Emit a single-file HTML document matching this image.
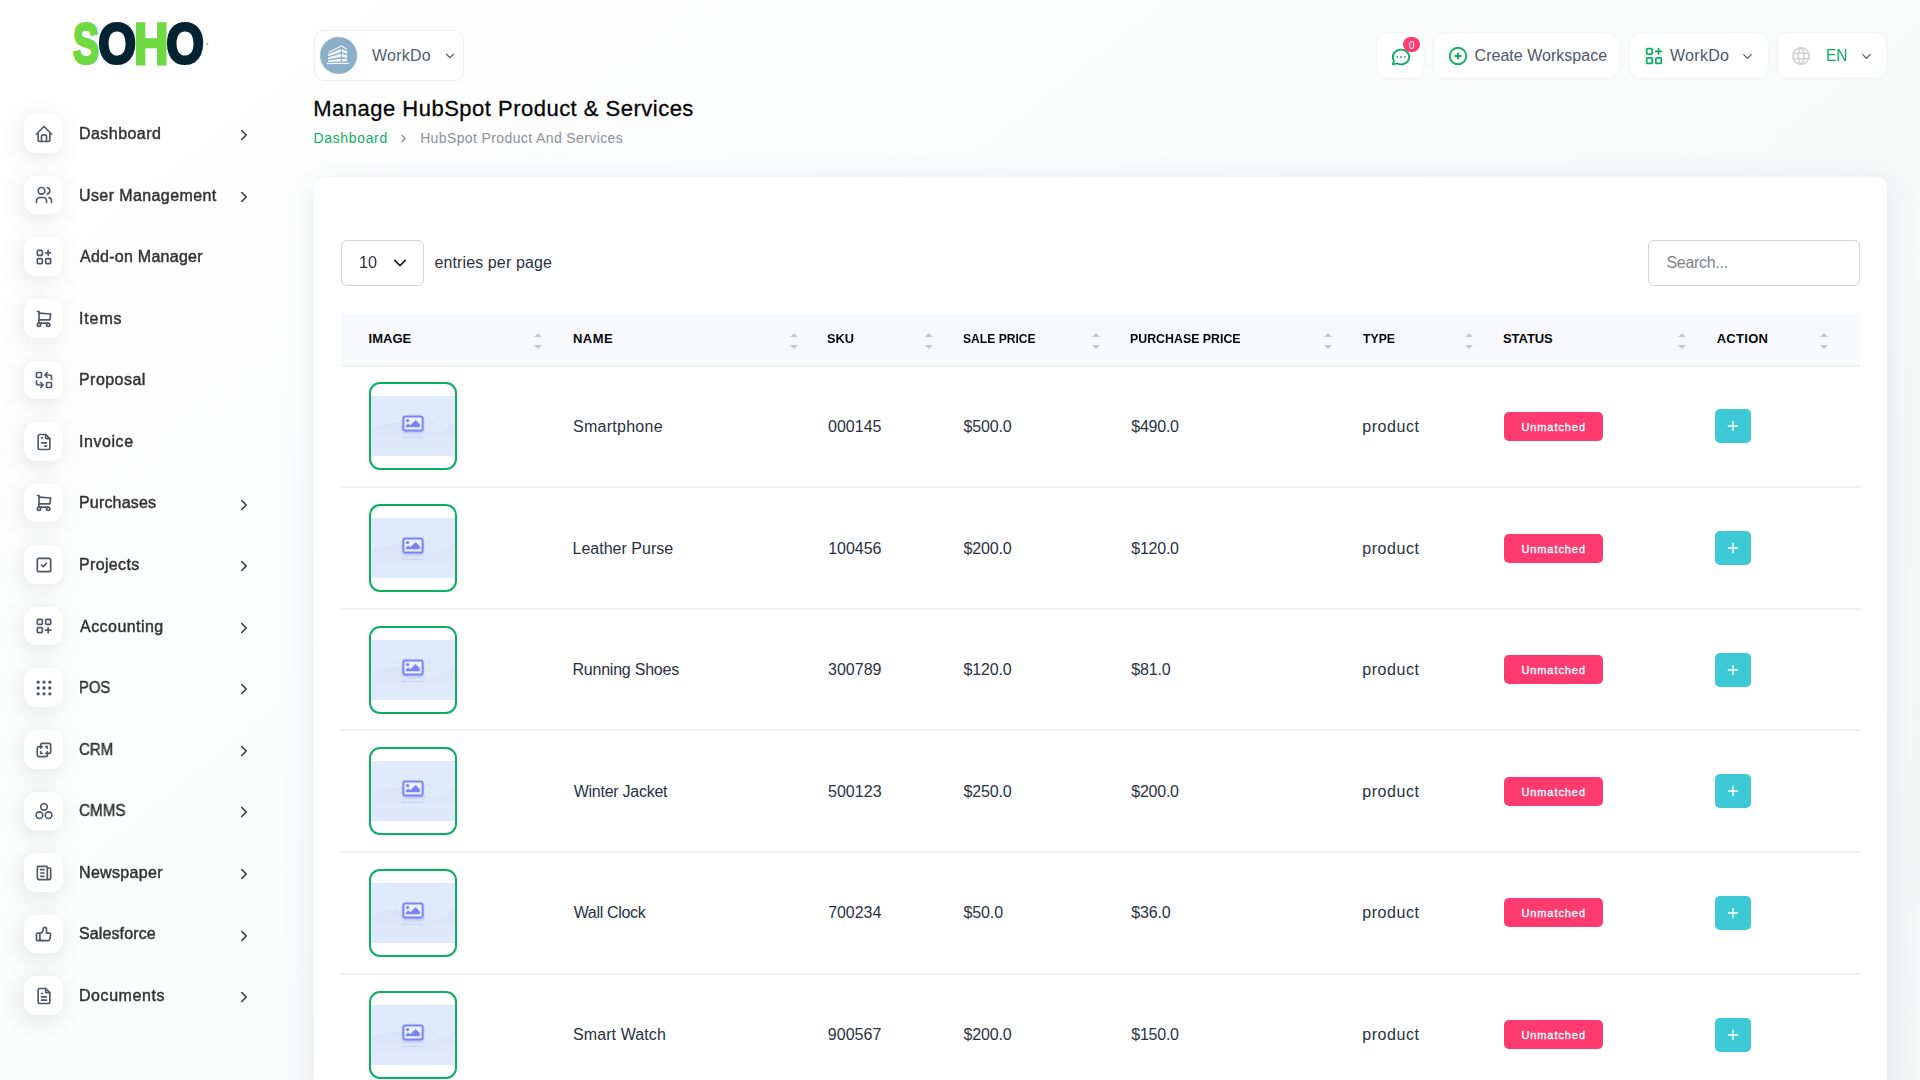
<!DOCTYPE html>
<html lang="en">
<head>
<meta charset="utf-8">
<title>Manage HubSpot Product &amp; Services</title>
<style>
*{box-sizing:border-box;margin:0;padding:0}
html,body{width:1920px;height:1080px;overflow:hidden}
body{font-family:"Liberation Sans",sans-serif;background:linear-gradient(141.55deg,rgba(240,244,243,0) 3.46%,#f0f4f3 99.86%) 0 0/1920px 1700px no-repeat,#fff;color:#293240;position:relative}
.abs{position:absolute}
.t{position:absolute;white-space:nowrap;line-height:20px;margin-top:-10px;transform-origin:0 50%}
.g{will-change:transform}
.tc{transform:translateX(-50%);transform-origin:50% 50%}
.ic{position:absolute;fill:none;stroke-linecap:round;stroke-linejoin:round}
.mi{position:absolute;left:24px;width:38.6px;height:38.6px;border-radius:12px;background:#fff;box-shadow:-3px 4px 23px rgba(0,0,0,.1)}
.pill{position:absolute;background:#fff;border-radius:12px;box-shadow:0 0 2px rgba(0,0,0,.08)}
#card{position:absolute;left:314px;top:177px;width:1573px;height:920px;background:#fff;border-radius:10px;box-shadow:0 6px 30px rgba(182,186,203,.3)}
.inp{position:absolute;border:1px solid #ced4da;border-radius:6px;background:#fff}
#thead{position:absolute;left:341px;top:313px;width:1519px;height:54px;background:#f8f9fd;border-bottom:2px solid #f1f1f1}
.rowline{position:absolute;left:341px;width:1519px;height:2px;background:#f1f1f1}
.thumb{position:absolute;left:369px;width:88px;height:88px;border:2px solid #0caf60;border-radius:11px;background:#fff;overflow:hidden}
.thumb i{position:absolute;left:0;top:11.9px;width:84px;height:59.8px;background:#e0eafd}
.thumb svg{position:absolute;left:0;top:11.9px;width:84px;height:60px}
.badge{position:absolute;left:1503.8px;width:99.2px;height:29px;border-radius:5px;background:#ff3a6e}
.act{position:absolute;left:1715px;width:36px;height:33.8px;border-radius:5px;background:#3ec9d6}
.sort{position:absolute;top:333.2px;width:8px;height:16px}
.sort:before{content:"";position:absolute;left:0;top:0;border:4px solid transparent;border-top:0;border-bottom:4px solid #c8c8c8}
.sort:after{content:"";position:absolute;left:0;top:11.8px;border:4px solid transparent;border-bottom:0;border-top:4px solid #c8c8c8}

</style>
</head>
<body>
<svg class="abs" style="left:0;top:0" width="300" height="100" role="img" aria-label="SOHO"><title>SOHO</title><g font-family="Liberation Sans, sans-serif" font-weight="700" font-size="56" stroke-width="3.0" stroke-linejoin="miter" text-rendering="geometricPrecision"><text transform="translate(73.11 63.30) scale(0.6978 1.0104)" fill="#6fd943" stroke="#6fd943">S</text><text transform="translate(98.34 63.30) scale(0.8677 1.0108)" fill="#022332" stroke="#022332">O</text><text transform="translate(134.07 63.73) scale(0.8505 1.0418)" fill="#6fd943" stroke="#6fd943">H</text><text transform="translate(166.30 63.30) scale(0.8654 1.0108)" fill="#022332" stroke="#022332">O</text></g><circle cx="207.4" cy="44" r="0.9" fill="#0caf60" opacity=".7"/></svg>
<div class="abs" style="left:0;top:0;width:290px;height:1035px;overflow:hidden"><div class="mi" style="top:114.30px"></div><div class="mi" style="top:175.87px"></div><div class="mi" style="top:237.44px"></div><div class="mi" style="top:299.01px"></div><div class="mi" style="top:360.58px"></div><div class="mi" style="top:422.15px"></div><div class="mi" style="top:483.72px"></div><div class="mi" style="top:545.29px"></div><div class="mi" style="top:606.86px"></div><div class="mi" style="top:668.43px"></div><div class="mi" style="top:730.00px"></div><div class="mi" style="top:791.57px"></div><div class="mi" style="top:853.14px"></div><div class="mi" style="top:914.71px"></div><div class="mi" style="top:976.28px"></div></div>
<svg class="ic" style="left:33.50px;top:123.80px;width:20.00px;height:20.00px;stroke:#4f5968;stroke-width:2" viewBox="0 0 24 24"><polyline points="5 12 3 12 12 3 21 12 19 12"/><path d="M5 12v7a2 2 0 0 0 2 2h10a2 2 0 0 0 2 -2v-7"/><path d="M9 21v-6a2 2 0 0 1 2 -2h2a2 2 0 0 1 2 2v6"/></svg>
<span id="t0" class="t g" style="left:78.82px;top:134.00px;font-size:16px;color:#333;letter-spacing:0.446px;-webkit-text-stroke:.45px #333;">Dashboard</span>
<svg class="ic" style="left:234.60px;top:126.20px;width:18.00px;height:18.00px;stroke:#333;stroke-width:2" viewBox="0 0 24 24"><polyline points="9 6 15 12 9 18"/></svg>
<svg class="ic" style="left:33.50px;top:185.37px;width:20.00px;height:20.00px;stroke:#4f5968;stroke-width:2" viewBox="0 0 24 24"><circle cx="9" cy="7" r="4"/><path d="M3 21v-2a4 4 0 0 1 4 -4h4a4 4 0 0 1 4 4v2"/><path d="M16 3.13a4 4 0 0 1 0 7.75"/><path d="M21 21v-2a4 4 0 0 0 -3 -3.85"/></svg>
<span id="t1" class="t g" style="left:78.83px;top:196.00px;font-size:16px;color:#333;letter-spacing:0.402px;-webkit-text-stroke:.45px #333;">User Management</span>
<svg class="ic" style="left:234.60px;top:187.77px;width:18.00px;height:18.00px;stroke:#333;stroke-width:2" viewBox="0 0 24 24"><polyline points="9 6 15 12 9 18"/></svg>
<svg class="ic" style="left:33.50px;top:246.94px;width:20.00px;height:20.00px;stroke:#4f5968;stroke-width:2" viewBox="0 0 24 24"><rect x="4" y="4" width="6" height="6" rx="1"/><rect x="4" y="14" width="6" height="6" rx="1"/><rect x="14" y="14" width="6" height="6" rx="1"/><line x1="14" y1="7" x2="20" y2="7"/><line x1="17" y1="4" x2="17" y2="10"/></svg>
<span id="t2" class="t g" style="left:79.86px;top:257.00px;font-size:16px;color:#333;letter-spacing:0.259px;-webkit-text-stroke:.45px #333;">Add-on Manager</span>
<svg class="ic" style="left:33.50px;top:308.51px;width:20.00px;height:20.00px;stroke:#4f5968;stroke-width:2" viewBox="0 0 24 24"><circle cx="6" cy="19" r="2"/><circle cx="17" cy="19" r="2"/><path d="M17 17h-11v-14h-2"/><path d="M6 5l14 1l-1 7h-13"/></svg>
<span id="t3" class="t g" style="left:79.16px;top:319.00px;font-size:16px;color:#333;letter-spacing:0.867px;-webkit-text-stroke:.45px #333;">Items</span>
<svg class="ic" style="left:33.50px;top:370.08px;width:20.00px;height:20.00px;stroke:#4f5968;stroke-width:2" viewBox="0 0 24 24"><rect x="3" y="3" width="6" height="6" rx="1"/><rect x="15" y="15" width="6" height="6" rx="1"/><path d="M21 11v-3a2 2 0 0 0 -2 -2h-6l3 3m0 -6l-3 3"/><path d="M3 13v3a2 2 0 0 0 2 2h6l-3 -3m0 6l3 -3"/></svg>
<span id="t4" class="t g" style="left:78.70px;top:380.00px;font-size:16px;color:#333;letter-spacing:0.448px;-webkit-text-stroke:.45px #333;">Proposal</span>
<svg class="ic" style="left:33.50px;top:431.65px;width:20.00px;height:20.00px;stroke:#4f5968;stroke-width:2" viewBox="0 0 24 24"><path d="M14 3v4a1 1 0 0 0 1 1h4"/><path d="M17 21h-10a2 2 0 0 1 -2 -2v-14a2 2 0 0 1 2 -2h7l5 5v11a2 2 0 0 1 -2 2z"/><line x1="9" y1="7" x2="10" y2="7"/><line x1="9" y1="13" x2="15" y2="13"/><line x1="13" y1="17" x2="15" y2="17"/></svg>
<span id="t5" class="t g" style="left:79.16px;top:442.00px;font-size:16px;color:#333;letter-spacing:0.563px;-webkit-text-stroke:.45px #333;">Invoice</span>
<svg class="ic" style="left:33.50px;top:493.22px;width:20.00px;height:20.00px;stroke:#4f5968;stroke-width:2" viewBox="0 0 24 24"><circle cx="6" cy="19" r="2"/><circle cx="17" cy="19" r="2"/><path d="M17 17h-11v-14h-2"/><path d="M6 5l14 1l-1 7h-13"/></svg>
<span id="t6" class="t g" style="left:78.70px;top:503.00px;font-size:16px;color:#333;letter-spacing:0.179px;-webkit-text-stroke:.45px #333;">Purchases</span>
<svg class="ic" style="left:234.60px;top:495.62px;width:18.00px;height:18.00px;stroke:#333;stroke-width:2" viewBox="0 0 24 24"><polyline points="9 6 15 12 9 18"/></svg>
<svg class="ic" style="left:33.50px;top:554.79px;width:20.00px;height:20.00px;stroke:#4f5968;stroke-width:2" viewBox="0 0 24 24"><rect x="4" y="4" width="16" height="16" rx="2"/><path d="M9 12l2 2l4 -4"/></svg>
<span id="t7" class="t g" style="left:78.82px;top:565.00px;font-size:16px;color:#333;letter-spacing:0.354px;-webkit-text-stroke:.45px #333;">Projects</span>
<svg class="ic" style="left:234.60px;top:557.19px;width:18.00px;height:18.00px;stroke:#333;stroke-width:2" viewBox="0 0 24 24"><polyline points="9 6 15 12 9 18"/></svg>
<svg class="ic" style="left:33.50px;top:616.36px;width:20.00px;height:20.00px;stroke:#4f5968;stroke-width:2" viewBox="0 0 24 24"><rect x="4" y="4" width="6" height="6" rx="1"/><rect x="14" y="4" width="6" height="6" rx="1"/><rect x="4" y="14" width="6" height="6" rx="1"/><path d="M14 17h6m-3 -3v6"/></svg>
<span id="t8" class="t g" style="left:79.51px;top:627.00px;font-size:16px;color:#333;letter-spacing:0.455px;-webkit-text-stroke:.45px #333;">Accounting</span>
<svg class="ic" style="left:234.60px;top:618.76px;width:18.00px;height:18.00px;stroke:#333;stroke-width:2" viewBox="0 0 24 24"><polyline points="9 6 15 12 9 18"/></svg>
<svg class="ic" style="left:33.50px;top:677.93px;width:20.00px;height:20.00px;stroke:#4f5968;stroke-width:2" viewBox="0 0 24 24"><circle cx="5" cy="5" r="1"/><circle cx="12" cy="5" r="1"/><circle cx="19" cy="5" r="1"/><circle cx="5" cy="12" r="1"/><circle cx="12" cy="12" r="1"/><circle cx="19" cy="12" r="1"/><circle cx="5" cy="19" r="1"/><circle cx="12" cy="19" r="1"/><circle cx="19" cy="19" r="1"/></svg>
<span id="t9" class="t g" style="left:79.24px;top:688.00px;font-size:16px;color:#333;transform:scaleX(0.9272);-webkit-text-stroke:.45px #333;">POS</span>
<svg class="ic" style="left:234.60px;top:680.33px;width:18.00px;height:18.00px;stroke:#333;stroke-width:2" viewBox="0 0 24 24"><polyline points="9 6 15 12 9 18"/></svg>
<svg class="ic" style="left:33.50px;top:739.50px;width:20.00px;height:20.00px;stroke:#4f5968;stroke-width:2" viewBox="0 0 24 24"><path d="M16 16v2a2 2 0 0 1 -2 2h-8a2 2 0 0 1 -2 -2v-8a2 2 0 0 1 2 -2h2v-2a2 2 0 0 1 2 -2h8a2 2 0 0 1 2 2v8a2 2 0 0 1 -2 2h-2"/><polyline points="10 8 8 8 8 10"/><polyline points="8 14 8 16 10 16"/><polyline points="14 8 16 8 16 10"/><polyline points="16 14 16 16 14 16"/></svg>
<span id="t10" class="t g" style="left:79.26px;top:750.00px;font-size:16px;color:#333;transform:scaleX(0.9393);-webkit-text-stroke:.45px #333;">CRM</span>
<svg class="ic" style="left:234.60px;top:741.90px;width:18.00px;height:18.00px;stroke:#333;stroke-width:2" viewBox="0 0 24 24"><polyline points="9 6 15 12 9 18"/></svg>
<svg class="ic" style="left:33.50px;top:801.07px;width:20.00px;height:20.00px;stroke:#4f5968;stroke-width:2" viewBox="0 0 24 24"><circle cx="12" cy="7" r="4"/><circle cx="6.5" cy="17" r="4"/><circle cx="17.5" cy="17" r="4"/></svg>
<span id="t11" class="t g" style="left:79.17px;top:811.00px;font-size:16px;color:#333;transform:scaleX(0.9504);-webkit-text-stroke:.45px #333;">CMMS</span>
<svg class="ic" style="left:234.60px;top:803.47px;width:18.00px;height:18.00px;stroke:#333;stroke-width:2" viewBox="0 0 24 24"><polyline points="9 6 15 12 9 18"/></svg>
<svg class="ic" style="left:33.50px;top:862.64px;width:20.00px;height:20.00px;stroke:#4f5968;stroke-width:2" viewBox="0 0 24 24"><path d="M16 6h3a1 1 0 0 1 1 1v11a2 2 0 0 1 -4 0v-13a1 1 0 0 0 -1 -1h-10a1 1 0 0 0 -1 1v12a3 3 0 0 0 3 3h11"/><line x1="8" y1="8" x2="12" y2="8"/><line x1="8" y1="12" x2="12" y2="12"/><line x1="8" y1="16" x2="12" y2="16"/></svg>
<span id="t12" class="t g" style="left:78.84px;top:873.00px;font-size:16px;color:#333;letter-spacing:0.322px;-webkit-text-stroke:.45px #333;">Newspaper</span>
<svg class="ic" style="left:234.60px;top:865.04px;width:18.00px;height:18.00px;stroke:#333;stroke-width:2" viewBox="0 0 24 24"><polyline points="9 6 15 12 9 18"/></svg>
<svg class="ic" style="left:33.50px;top:924.21px;width:20.00px;height:20.00px;stroke:#4f5968;stroke-width:2" viewBox="0 0 24 24"><path d="M7 11v8a1 1 0 0 1 -1 1h-2a1 1 0 0 1 -1 -1v-7a1 1 0 0 1 1 -1h3a4 4 0 0 0 4 -4v-1a2 2 0 0 1 4 0v5h3a2 2 0 0 1 2 2l-1 5a2 3 0 0 1 -2 2h-7a3 3 0 0 1 -3 -3"/></svg>
<span id="t13" class="t g" style="left:79.03px;top:934.00px;font-size:16px;color:#333;letter-spacing:0.119px;-webkit-text-stroke:.45px #333;">Salesforce</span>
<svg class="ic" style="left:234.60px;top:926.61px;width:18.00px;height:18.00px;stroke:#333;stroke-width:2" viewBox="0 0 24 24"><polyline points="9 6 15 12 9 18"/></svg>
<svg class="ic" style="left:33.50px;top:985.78px;width:20.00px;height:20.00px;stroke:#4f5968;stroke-width:2" viewBox="0 0 24 24"><path d="M14 3v4a1 1 0 0 0 1 1h4"/><path d="M17 21h-10a2 2 0 0 1 -2 -2v-14a2 2 0 0 1 2 -2h7l5 5v11a2 2 0 0 1 -2 2z"/><line x1="9" y1="9" x2="10" y2="9"/><line x1="9" y1="13" x2="15" y2="13"/><line x1="9" y1="17" x2="15" y2="17"/></svg>
<span id="t14" class="t g" style="left:78.82px;top:996.00px;font-size:16px;color:#333;letter-spacing:0.563px;-webkit-text-stroke:.45px #333;">Documents</span>
<svg class="ic" style="left:234.60px;top:988.18px;width:18.00px;height:18.00px;stroke:#333;stroke-width:2" viewBox="0 0 24 24"><polyline points="9 6 15 12 9 18"/></svg>
<div class="pill" style="left:314px;top:30px;width:150px;height:51px;border-radius:10px;border:1px solid #efefef;box-shadow:none"></div>
<svg class="abs" style="left:319px;top:36px" width="39" height="39" viewBox="0 0 39 39">
<circle cx="19.5" cy="19.45" r="18.9" fill="#c9ecd9"/><circle cx="19.6" cy="19.5" r="18.3" fill="#8cafc9"/>
<g fill="#f6f9fb"><path d="M9.6 15.8L22.4 9.2L27.9 12.5V13.7L22.4 10.6L9.6 17.1Z"/>
<path d="M9.06 18.3L21.8 13.06V16.1L9.06 20.3Z"/><path d="M9.06 21.4L21.8 17.8V21.1L9.06 23.3Z"/><path d="M9.06 24.4L21.8 22.8V25.6L9.06 26.1Z"/>
<path d="M22.9 13.06L28.1 15.3V17.8L22.9 16.1Z"/><path d="M22.9 17.8L28.1 19.2V21.7L22.9 21.1Z"/><path d="M22.9 22.8L28.1 23.06V25.3L22.9 25.6Z"/>
<rect x="7.9" y="26.9" width="22" height="1.15"/></g></svg>
<span id="t15" class="t" style="left:372.00px;top:56.00px;font-size:16px;color:#535d6b;letter-spacing:0.236px;">WorkDo</span>
<svg class="ic" style="left:442.50px;top:49.40px;width:14.00px;height:14.00px;stroke:#535d6b;stroke-width:2" viewBox="0 0 24 24"><polyline points="6 9 12 15 18 9"/></svg>
<div class="pill" style="left:1377px;top:33px;width:47px;height:45px"></div>
<svg class="ic" style="left:1390.00px;top:46.20px;width:22.00px;height:22.00px;stroke:#0caf60;stroke-width:2" viewBox="0 0 24 24"><path d="M3 20l1.3 -3.9a9 8 0 1 1 3.4 2.9l-4.7 1"/><line x1="12" y1="12" x2="12" y2="12.01"/><line x1="8" y1="12" x2="8" y2="12.01"/><line x1="16" y1="12" x2="16" y2="12.01"/></svg>
<div class="abs" style="left:1403px;top:37px;width:17px;height:15px;border-radius:8px;background:#ff3a6e"></div>
<span id="t16" class="t tc" style="left:1411.60px;top:45.40px;font-size:10.5px;color:#fff;">0</span>
<div class="pill" style="left:1433.5px;top:33px;width:185.5px;height:45px"></div>
<svg class="ic" style="left:1446.90px;top:45.20px;width:22.00px;height:22.00px;stroke:#0caf60;stroke-width:2" viewBox="0 0 24 24"><circle cx="12" cy="12" r="9"/><line x1="9" y1="12" x2="15" y2="12"/><line x1="12" y1="9" x2="12" y2="15"/></svg>
<span id="t17" class="t" style="left:1474.60px;top:56.00px;font-size:16px;color:#4f5968;letter-spacing:0.018px;">Create Workspace</span>
<div class="pill" style="left:1629.5px;top:33px;width:138.5px;height:45px"></div>
<svg class="ic" style="left:1642.50px;top:45.40px;width:22.00px;height:22.00px;stroke:#0caf60;stroke-width:2" viewBox="0 0 24 24"><rect x="4" y="4" width="6" height="6" rx="1"/><rect x="4" y="14" width="6" height="6" rx="1"/><rect x="14" y="14" width="6" height="6" rx="1"/><line x1="14" y1="7" x2="20" y2="7"/><line x1="17" y1="4" x2="17" y2="10"/></svg>
<span id="t18" class="t" style="left:1670.00px;top:56.00px;font-size:16px;color:#4f5968;letter-spacing:0.303px;">WorkDo</span>
<svg class="ic" style="left:1740.10px;top:48.70px;width:15.00px;height:15.00px;stroke:#4f5968;stroke-width:2" viewBox="0 0 24 24"><polyline points="6 9 12 15 18 9"/></svg>
<div class="pill" style="left:1778px;top:33px;width:108px;height:45px"></div>
<svg class="ic" style="left:1790.40px;top:45.00px;width:22.00px;height:22.00px;stroke:#d0d0d0;stroke-width:1.8" viewBox="0 0 24 24"><circle cx="12" cy="12" r="9"/><line x1="3.6" y1="9" x2="20.4" y2="9"/><line x1="3.6" y1="15" x2="20.4" y2="15"/><path d="M11.5 3a17 17 0 0 0 0 18"/><path d="M12.5 3a17 17 0 0 1 0 18"/></svg>
<span id="t19" class="t" style="left:1826.14px;top:56.00px;font-size:16px;color:#0caf60;transform:scaleX(0.9708);">EN</span>
<svg class="ic" style="left:1858.70px;top:48.70px;width:15.00px;height:15.00px;stroke:#4f5968;stroke-width:2" viewBox="0 0 24 24"><polyline points="6 9 12 15 18 9"/></svg>
<span id="t20" class="t" style="left:313.31px;top:109.00px;font-size:22px;color:#060606;letter-spacing:0.489px;-webkit-text-stroke:.3px #060606;">Manage HubSpot Product &amp; Services</span>
<span id="t21" class="t" style="left:313.42px;top:138.00px;font-size:14px;color:#0caf60;letter-spacing:0.662px;">Dashboard</span>
<svg class="ic" style="left:396.90px;top:131.50px;width:13.00px;height:13.00px;stroke:#7d8590;stroke-width:2" viewBox="0 0 24 24"><polyline points="9 6 15 12 9 18"/></svg>
<span id="t22" class="t" style="left:420.13px;top:138.00px;font-size:14px;color:#8a929a;letter-spacing:0.385px;">HubSpot Product And Services</span>
<svg width="0" height="0" style="position:absolute"><defs><linearGradient id="wg" x1="0" y1="0" x2="0" y2="1"><stop offset="0" stop-color="#d9e2f8"/><stop offset=".45" stop-color="#dde6fa"/><stop offset="1" stop-color="#e0eafd"/></linearGradient><filter id="ds" x="-30%" y="-30%" width="160%" height="190%"><feDropShadow dx="0" dy="1.6" stdDeviation="1.3" flood-color="#7684f0" flood-opacity=".38"/></filter></defs></svg>
<div id="card"></div>
<div class="inp" style="left:341px;top:240px;width:83px;height:46px"></div>
<span id="t23" class="t" style="left:359.33px;top:263.00px;font-size:16px;color:#293240;transform:scaleX(1.0245);">10</span>
<svg class="ic" style="left:392.9px;top:256px;width:14px;height:14px;stroke:#1f2429;stroke-width:2" viewBox="0 0 16 16"><path d="m2 5 6 6 6-6"/></svg>
<span id="t24" class="t" style="left:434.38px;top:263.00px;font-size:16px;color:#293240;letter-spacing:0.125px;">entries per page</span>
<div class="inp" style="left:1648px;top:240px;width:212px;height:46px"></div>
<span id="t25" class="t" style="left:1666.51px;top:263.00px;font-size:16px;color:#7b838c;letter-spacing:-0.304px;">Search...</span>
<div id="thead"></div>
<span id="t26" class="t" style="left:368.62px;top:339.00px;font-size:13px;color:#060606;font-weight:700;letter-spacing:0.014px;">IMAGE</span>
<i class="sort" style="left:533.9px"></i>
<span id="t27" class="t" style="left:572.93px;top:339.00px;font-size:13px;color:#060606;font-weight:700;letter-spacing:0.487px;">NAME</span>
<i class="sort" style="left:789.8px"></i>
<span id="t28" class="t" style="left:827.13px;top:339.00px;font-size:13px;color:#060606;font-weight:700;transform:scaleX(0.9848);">SKU</span>
<i class="sort" style="left:925.0px"></i>
<span id="t29" class="t" style="left:962.59px;top:339.00px;font-size:13px;color:#060606;font-weight:700;transform:scaleX(0.9317);">SALE PRICE</span>
<i class="sort" style="left:1092.0px"></i>
<span id="t30" class="t" style="left:1130.17px;top:339.00px;font-size:13px;color:#060606;font-weight:700;transform:scaleX(0.9512);">PURCHASE PRICE</span>
<i class="sort" style="left:1323.8px"></i>
<span id="t31" class="t" style="left:1363.00px;top:339.00px;font-size:13px;color:#060606;font-weight:700;transform:scaleX(0.9412);">TYPE</span>
<i class="sort" style="left:1465.0px"></i>
<span id="t32" class="t" style="left:1503.00px;top:339.00px;font-size:13px;color:#060606;font-weight:700;letter-spacing:-0.059px;">STATUS</span>
<i class="sort" style="left:1677.7px"></i>
<span id="t33" class="t" style="left:1716.70px;top:339.00px;font-size:13px;color:#060606;font-weight:700;letter-spacing:0.285px;">ACTION</span>
<i class="sort" style="left:1819.7px"></i>
<div class="thumb" style="top:382.0px"><i></i><svg viewBox="0 0 84 60"><path d="M0 33 C14 26 30 24 42 30 S70 42 84 24 V60 H0Z" fill="url(#wg)"/><rect x="32.4" y="20.5" width="19.2" height="14" rx="1.4" fill="#eef0fe" stroke="#7a85f5" stroke-width="2" filter="url(#ds)"/><circle cx="36.6" cy="24.6" r="1.6" fill="#7a85f5"/><path d="M35 31.1V29.6L37.1 27.7L39.4 29.3L44.6 24.2L48.7 28.2V31.1Z" fill="#7a85f5" stroke="#7a85f5" stroke-width=".4" stroke-linejoin="round"/><path d="M31 41.4H52.4" stroke="#bcc5f3" stroke-width=".8" stroke-dasharray="4 .8 1.6 .8 2.4 .8"/><g fill="#c5cff7"><circle cx="25.5" cy="23.4" r=".6"/><circle cx="22.4" cy="27.5" r=".6"/><rect x="25.2" y="30.2" width="2.4" height="1.3" rx=".6" fill="#d3dbf9"/><rect x="57.2" y="23.1" width="1.6" height="1.5" rx=".5" fill="#d3dbf9"/><circle cx="61.3" cy="27.5" r=".6"/><circle cx="58.5" cy="31.3" r=".6"/></g></svg></div>
<span id="t34" class="t" style="left:572.99px;top:427.00px;font-size:16px;color:#293240;letter-spacing:0.268px;">Smartphone</span>
<span id="t35" class="t" style="left:828.03px;top:427.00px;font-size:16px;color:#293240;letter-spacing:0.009px;">000145</span>
<span id="t36" class="t" style="left:963.42px;top:427.00px;font-size:16px;color:#293240;letter-spacing:-0.135px;">$500.0</span>
<span id="t37" class="t" style="left:1131.30px;top:427.00px;font-size:16px;color:#293240;letter-spacing:-0.249px;">$490.0</span>
<span id="t38" class="t" style="left:1362.21px;top:427.00px;font-size:16px;color:#293240;letter-spacing:0.555px;">product</span>
<div class="badge" style="top:412.0px"></div>
<span id="t39" class="t tc" style="left:1553.67px;top:427.00px;font-size:11px;color:#fff;letter-spacing:0.920px;-webkit-text-stroke:.35px #fff;">Unmatched</span>
<div class="act" style="top:409.0px"></div>
<svg class="ic" style="left:1725.20px;top:417.50px;width:16.00px;height:16.00px;stroke:#fff;stroke-width:2" viewBox="0 0 24 24"><line x1="12" y1="5" x2="12" y2="19"/><line x1="5" y1="12" x2="19" y2="12"/></svg>
<div class="rowline" style="top:486.0px"></div>
<div class="thumb" style="top:504.0px"><i></i><svg viewBox="0 0 84 60"><path d="M0 33 C14 26 30 24 42 30 S70 42 84 24 V60 H0Z" fill="url(#wg)"/><rect x="32.4" y="20.5" width="19.2" height="14" rx="1.4" fill="#eef0fe" stroke="#7a85f5" stroke-width="2" filter="url(#ds)"/><circle cx="36.6" cy="24.6" r="1.6" fill="#7a85f5"/><path d="M35 31.1V29.6L37.1 27.7L39.4 29.3L44.6 24.2L48.7 28.2V31.1Z" fill="#7a85f5" stroke="#7a85f5" stroke-width=".4" stroke-linejoin="round"/><path d="M31 41.4H52.4" stroke="#bcc5f3" stroke-width=".8" stroke-dasharray="4 .8 1.6 .8 2.4 .8"/><g fill="#c5cff7"><circle cx="25.5" cy="23.4" r=".6"/><circle cx="22.4" cy="27.5" r=".6"/><rect x="25.2" y="30.2" width="2.4" height="1.3" rx=".6" fill="#d3dbf9"/><rect x="57.2" y="23.1" width="1.6" height="1.5" rx=".5" fill="#d3dbf9"/><circle cx="61.3" cy="27.5" r=".6"/><circle cx="58.5" cy="31.3" r=".6"/></g></svg></div>
<span id="t40" class="t" style="left:572.50px;top:549.00px;font-size:16px;color:#293240;letter-spacing:0.017px;">Leather Purse</span>
<span id="t41" class="t" style="left:828.18px;top:549.00px;font-size:16px;color:#293240;letter-spacing:-0.034px;">100456</span>
<span id="t42" class="t" style="left:963.42px;top:549.00px;font-size:16px;color:#293240;letter-spacing:-0.135px;">$200.0</span>
<span id="t43" class="t" style="left:1131.30px;top:549.00px;font-size:16px;color:#293240;letter-spacing:-0.249px;">$120.0</span>
<span id="t44" class="t" style="left:1362.21px;top:549.00px;font-size:16px;color:#293240;letter-spacing:0.555px;">product</span>
<div class="badge" style="top:533.6px"></div>
<span id="t45" class="t tc" style="left:1553.67px;top:549.00px;font-size:11px;color:#fff;letter-spacing:0.920px;-webkit-text-stroke:.35px #fff;">Unmatched</span>
<div class="act" style="top:531.0px"></div>
<svg class="ic" style="left:1725.20px;top:539.50px;width:16.00px;height:16.00px;stroke:#fff;stroke-width:2" viewBox="0 0 24 24"><line x1="12" y1="5" x2="12" y2="19"/><line x1="5" y1="12" x2="19" y2="12"/></svg>
<div class="rowline" style="top:608.0px"></div>
<div class="thumb" style="top:626.0px"><i></i><svg viewBox="0 0 84 60"><path d="M0 33 C14 26 30 24 42 30 S70 42 84 24 V60 H0Z" fill="url(#wg)"/><rect x="32.4" y="20.5" width="19.2" height="14" rx="1.4" fill="#eef0fe" stroke="#7a85f5" stroke-width="2" filter="url(#ds)"/><circle cx="36.6" cy="24.6" r="1.6" fill="#7a85f5"/><path d="M35 31.1V29.6L37.1 27.7L39.4 29.3L44.6 24.2L48.7 28.2V31.1Z" fill="#7a85f5" stroke="#7a85f5" stroke-width=".4" stroke-linejoin="round"/><path d="M31 41.4H52.4" stroke="#bcc5f3" stroke-width=".8" stroke-dasharray="4 .8 1.6 .8 2.4 .8"/><g fill="#c5cff7"><circle cx="25.5" cy="23.4" r=".6"/><circle cx="22.4" cy="27.5" r=".6"/><rect x="25.2" y="30.2" width="2.4" height="1.3" rx=".6" fill="#d3dbf9"/><rect x="57.2" y="23.1" width="1.6" height="1.5" rx=".5" fill="#d3dbf9"/><circle cx="61.3" cy="27.5" r=".6"/><circle cx="58.5" cy="31.3" r=".6"/></g></svg></div>
<span id="t46" class="t" style="left:572.50px;top:670.00px;font-size:16px;color:#293240;letter-spacing:-0.225px;">Running Shoes</span>
<span id="t47" class="t" style="left:828.03px;top:670.00px;font-size:16px;color:#293240;letter-spacing:0.008px;">300789</span>
<span id="t48" class="t" style="left:963.42px;top:670.00px;font-size:16px;color:#293240;letter-spacing:-0.135px;">$120.0</span>
<span id="t49" class="t" style="left:1131.30px;top:670.00px;font-size:16px;color:#293240;letter-spacing:-0.194px;">$81.0</span>
<span id="t50" class="t" style="left:1362.21px;top:670.00px;font-size:16px;color:#293240;letter-spacing:0.555px;">product</span>
<div class="badge" style="top:655.3px"></div>
<span id="t51" class="t tc" style="left:1553.67px;top:670.00px;font-size:11px;color:#fff;letter-spacing:0.920px;-webkit-text-stroke:.35px #fff;">Unmatched</span>
<div class="act" style="top:653.0px"></div>
<svg class="ic" style="left:1725.20px;top:661.50px;width:16.00px;height:16.00px;stroke:#fff;stroke-width:2" viewBox="0 0 24 24"><line x1="12" y1="5" x2="12" y2="19"/><line x1="5" y1="12" x2="19" y2="12"/></svg>
<div class="rowline" style="top:729.0px"></div>
<div class="thumb" style="top:747.0px"><i></i><svg viewBox="0 0 84 60"><path d="M0 33 C14 26 30 24 42 30 S70 42 84 24 V60 H0Z" fill="url(#wg)"/><rect x="32.4" y="20.5" width="19.2" height="14" rx="1.4" fill="#eef0fe" stroke="#7a85f5" stroke-width="2" filter="url(#ds)"/><circle cx="36.6" cy="24.6" r="1.6" fill="#7a85f5"/><path d="M35 31.1V29.6L37.1 27.7L39.4 29.3L44.6 24.2L48.7 28.2V31.1Z" fill="#7a85f5" stroke="#7a85f5" stroke-width=".4" stroke-linejoin="round"/><path d="M31 41.4H52.4" stroke="#bcc5f3" stroke-width=".8" stroke-dasharray="4 .8 1.6 .8 2.4 .8"/><g fill="#c5cff7"><circle cx="25.5" cy="23.4" r=".6"/><circle cx="22.4" cy="27.5" r=".6"/><rect x="25.2" y="30.2" width="2.4" height="1.3" rx=".6" fill="#d3dbf9"/><rect x="57.2" y="23.1" width="1.6" height="1.5" rx=".5" fill="#d3dbf9"/><circle cx="61.3" cy="27.5" r=".6"/><circle cx="58.5" cy="31.3" r=".6"/></g></svg></div>
<span id="t52" class="t" style="left:573.70px;top:792.00px;font-size:16px;color:#293240;letter-spacing:-0.255px;">Winter Jacket</span>
<span id="t53" class="t" style="left:828.00px;top:792.00px;font-size:16px;color:#293240;letter-spacing:0.039px;">500123</span>
<span id="t54" class="t" style="left:963.42px;top:792.00px;font-size:16px;color:#293240;letter-spacing:-0.135px;">$250.0</span>
<span id="t55" class="t" style="left:1131.30px;top:792.00px;font-size:16px;color:#293240;letter-spacing:-0.249px;">$200.0</span>
<span id="t56" class="t" style="left:1362.21px;top:792.00px;font-size:16px;color:#293240;letter-spacing:0.555px;">product</span>
<div class="badge" style="top:776.9px"></div>
<span id="t57" class="t tc" style="left:1553.67px;top:792.00px;font-size:11px;color:#fff;letter-spacing:0.920px;-webkit-text-stroke:.35px #fff;">Unmatched</span>
<div class="act" style="top:774.0px"></div>
<svg class="ic" style="left:1725.20px;top:782.50px;width:16.00px;height:16.00px;stroke:#fff;stroke-width:2" viewBox="0 0 24 24"><line x1="12" y1="5" x2="12" y2="19"/><line x1="5" y1="12" x2="19" y2="12"/></svg>
<div class="rowline" style="top:851.0px"></div>
<div class="thumb" style="top:869.0px"><i></i><svg viewBox="0 0 84 60"><path d="M0 33 C14 26 30 24 42 30 S70 42 84 24 V60 H0Z" fill="url(#wg)"/><rect x="32.4" y="20.5" width="19.2" height="14" rx="1.4" fill="#eef0fe" stroke="#7a85f5" stroke-width="2" filter="url(#ds)"/><circle cx="36.6" cy="24.6" r="1.6" fill="#7a85f5"/><path d="M35 31.1V29.6L37.1 27.7L39.4 29.3L44.6 24.2L48.7 28.2V31.1Z" fill="#7a85f5" stroke="#7a85f5" stroke-width=".4" stroke-linejoin="round"/><path d="M31 41.4H52.4" stroke="#bcc5f3" stroke-width=".8" stroke-dasharray="4 .8 1.6 .8 2.4 .8"/><g fill="#c5cff7"><circle cx="25.5" cy="23.4" r=".6"/><circle cx="22.4" cy="27.5" r=".6"/><rect x="25.2" y="30.2" width="2.4" height="1.3" rx=".6" fill="#d3dbf9"/><rect x="57.2" y="23.1" width="1.6" height="1.5" rx=".5" fill="#d3dbf9"/><circle cx="61.3" cy="27.5" r=".6"/><circle cx="58.5" cy="31.3" r=".6"/></g></svg></div>
<span id="t58" class="t" style="left:573.70px;top:913.00px;font-size:16px;color:#293240;letter-spacing:-0.325px;">Wall Clock</span>
<span id="t59" class="t" style="left:828.15px;top:913.00px;font-size:16px;color:#293240;letter-spacing:-0.044px;">700234</span>
<span id="t60" class="t" style="left:963.42px;top:913.00px;font-size:16px;color:#293240;letter-spacing:-0.102px;">$50.0</span>
<span id="t61" class="t" style="left:1131.30px;top:913.00px;font-size:16px;color:#293240;letter-spacing:-0.194px;">$36.0</span>
<span id="t62" class="t" style="left:1362.21px;top:913.00px;font-size:16px;color:#293240;letter-spacing:0.555px;">product</span>
<div class="badge" style="top:898.2px"></div>
<span id="t63" class="t tc" style="left:1553.67px;top:913.00px;font-size:11px;color:#fff;letter-spacing:0.920px;-webkit-text-stroke:.35px #fff;">Unmatched</span>
<div class="act" style="top:896.0px"></div>
<svg class="ic" style="left:1725.20px;top:904.50px;width:16.00px;height:16.00px;stroke:#fff;stroke-width:2" viewBox="0 0 24 24"><line x1="12" y1="5" x2="12" y2="19"/><line x1="5" y1="12" x2="19" y2="12"/></svg>
<div class="rowline" style="top:973.0px"></div>
<div class="thumb" style="top:991.0px"><i></i><svg viewBox="0 0 84 60"><path d="M0 33 C14 26 30 24 42 30 S70 42 84 24 V60 H0Z" fill="url(#wg)"/><rect x="32.4" y="20.5" width="19.2" height="14" rx="1.4" fill="#eef0fe" stroke="#7a85f5" stroke-width="2" filter="url(#ds)"/><circle cx="36.6" cy="24.6" r="1.6" fill="#7a85f5"/><path d="M35 31.1V29.6L37.1 27.7L39.4 29.3L44.6 24.2L48.7 28.2V31.1Z" fill="#7a85f5" stroke="#7a85f5" stroke-width=".4" stroke-linejoin="round"/><path d="M31 41.4H52.4" stroke="#bcc5f3" stroke-width=".8" stroke-dasharray="4 .8 1.6 .8 2.4 .8"/><g fill="#c5cff7"><circle cx="25.5" cy="23.4" r=".6"/><circle cx="22.4" cy="27.5" r=".6"/><rect x="25.2" y="30.2" width="2.4" height="1.3" rx=".6" fill="#d3dbf9"/><rect x="57.2" y="23.1" width="1.6" height="1.5" rx=".5" fill="#d3dbf9"/><circle cx="61.3" cy="27.5" r=".6"/><circle cx="58.5" cy="31.3" r=".6"/></g></svg></div>
<span id="t64" class="t" style="left:572.99px;top:1035.00px;font-size:16px;color:#293240;letter-spacing:0.093px;">Smart Watch</span>
<span id="t65" class="t" style="left:827.86px;top:1035.00px;font-size:16px;color:#293240;letter-spacing:0.010px;">900567</span>
<span id="t66" class="t" style="left:963.42px;top:1035.00px;font-size:16px;color:#293240;letter-spacing:-0.135px;">$200.0</span>
<span id="t67" class="t" style="left:1131.30px;top:1035.00px;font-size:16px;color:#293240;letter-spacing:-0.249px;">$150.0</span>
<span id="t68" class="t" style="left:1362.21px;top:1035.00px;font-size:16px;color:#293240;letter-spacing:0.555px;">product</span>
<div class="badge" style="top:1020.2px"></div>
<span id="t69" class="t tc" style="left:1553.67px;top:1035.00px;font-size:11px;color:#fff;letter-spacing:0.920px;-webkit-text-stroke:.35px #fff;">Unmatched</span>
<div class="act" style="top:1018.0px"></div>
<svg class="ic" style="left:1725.20px;top:1026.50px;width:16.00px;height:16.00px;stroke:#fff;stroke-width:2" viewBox="0 0 24 24"><line x1="12" y1="5" x2="12" y2="19"/><line x1="5" y1="12" x2="19" y2="12"/></svg>
</body>
</html>
